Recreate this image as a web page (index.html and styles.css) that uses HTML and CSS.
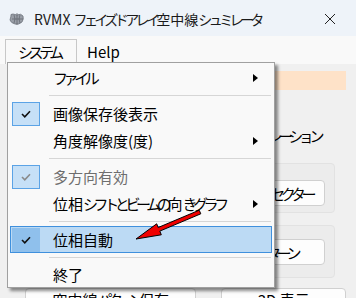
FILE: index.html
```html
<!DOCTYPE html>
<html lang="ja">
<head>
<meta charset="utf-8">
<link rel="stylesheet" href="styles.css">
</head>
<body>
<div class="window">
  <div class="titlebar">
    <svg class="appicon" width="16" height="14" viewBox="0 0 16 14">
      <path d="M2 4 Q1 2 4 2 L8 3 Q12 1 14 4 Q15 7 13 10 Q10 13 6 12 Q2 11 1 8 Z" fill="#9a9fa8" stroke="#6f747c" stroke-width="0.8"/>
      <path d="M8 1 V13 M3 7 H14 M5 3 Q7 7 5 11 M11 3 Q9 7 11 11" stroke="#5e636b" stroke-width="0.7" fill="none"/>
    </svg>
    <span class="title">RVMX <span class="k">フェイズドアレイ</span>空中線<span class="k">シュミレータ</span></span>
    <svg class="close" width="12" height="12" viewBox="0 0 12 12"><path d="M1 1 L11 11 M11 1 L1 11" stroke="#222" stroke-width="1"/></svg>
  </div>
  <div class="menubar">
    <span class="mtab open"><span class="k">システム</span></span>
    <span class="mtab help">Help</span>
  </div>
  <div class="content">
    <div class="field"></div>
    <div class="labelrow"><span class="k">シミュレーション</span></div>
    <div class="group g1"><span class="btn"><span class="k">ビームセクター</span></span></div>
    <div class="group g2"><span class="btn"><span class="k">パターン</span></span></div>
    <div class="bottomrow">
      <span class="btn wide">空中線<span class="k">パターン</span>保存</span>
      <span class="btn wide2">3D 表示</span>
    </div>
  </div>

  <div class="dropdown">
    <div class="item"><span class="gutter"></span><span class="txt k">ファイル</span><span class="arrow"></span></div>
    <div class="sep"></div>
    <div class="item"><span class="gutter"><span class="chk"><svg width="10" height="8" viewBox="0 0 10 8"><path d="M1 4 L3.8 6.8 L9 1.2" stroke="#111" stroke-width="1.6" fill="none"/></svg></span></span><span class="txt">画像保存後表示</span></div>
    <div class="item"><span class="gutter"></span><span class="txt">角度解像度(度)</span><span class="arrow"></span></div>
    <div class="sep"></div>
    <div class="item disabled"><span class="gutter"><span class="chk"><svg width="10" height="8" viewBox="0 0 10 8"><path d="M1 4 L3.8 6.8 L9 1.2" stroke="#8a8a8a" stroke-width="1.6" fill="none"/></svg></span></span><span class="txt">多方向有効</span></div>
    <div class="item"><span class="gutter"></span><span class="txt">位相<span class="k">シフトとビームの</span>向<span class="k">きグラフ</span></span><span class="arrow"></span></div>
    <div class="sep"></div>
    <div class="item hot"><span class="gutter"><span class="chk"><svg width="10" height="8" viewBox="0 0 10 8"><path d="M1 4 L3.8 6.8 L9 1.2" stroke="#111" stroke-width="1.6" fill="none"/></svg></span></span><span class="txt">位相自動</span></div>
    <div class="sep"></div>
    <div class="item last"><span class="gutter"></span><span class="txt">終了</span></div>
  </div>

  <svg class="redarrow" width="356" height="298" viewBox="0 0 356 298">
    <polygon points="136,239 161.3,234.8 159.8,231.1 200.8,213.8 199.2,210.2 158.2,227.5 156.7,223.8" fill="#f00000" stroke="#000" stroke-width="1"/>
  </svg>
</div>
</body>
</html>
```
FILE: styles.css
```css
* { box-sizing: border-box; }
html, body { margin: 0; padding: 0; }
body {
  width: 356px; height: 298px; overflow: hidden;
  background: #f0f0f0;
  font-family: "Noto Sans CJK JP", "Noto Sans", sans-serif;
  color: #000;
  white-space: nowrap;
}
.k { letter-spacing: -4.4px; }
.window { position: relative; width: 356px; height: 298px; overflow: hidden; }
.titlebar {
  height: 36px; background: #eef3f9;
  display: flex; align-items: center; padding-top: 1px;
}
.appicon { margin-left: 9px; margin-right: 9px; }
.title { font-size: 14px; flex: 1; color: #1a1a1a; }
.title .k { letter-spacing: -3.6px; }
.close { margin-right: 20px; }
.menubar {
  height: 28px; background: #f9f9f9;
  display: flex; align-items: flex-end; padding-left: 5px;
}
.mtab {
  font-size: 15px; height: 25px; line-height: 24px; padding: 0 10px 0 12px;
  border: 1px solid transparent; border-bottom: none;
}
.mtab.open { border-color: #c8c8c8; background: #f9f9f9; width: 72px; padding-left: 12px; padding-right: 0; }
.mtab.help { padding-left: 9px; }
.content {
  height: 234px;
  display: flex; flex-direction: column;
  padding: 7px 10px 0 20px;
}
.content > * { flex: none; }
.field { height: 19px; background: #fee2c8; }
.labelrow { display: flex; justify-content: flex-end; padding-right: 26px; margin-top: 36px; font-size: 15px; line-height: 20px; }
.group {
  margin-left: 140px; margin-right: 11px;
  border: 1px solid #e2e2e2; border-radius: 4px; background: #ececec;
  display: flex; justify-content: flex-end; align-items: flex-start; padding-right: 9px;
}
.g1 { margin-top: 17px; height: 50px; padding-top: 16px; }
.g2 { margin-top: 12px; height: 53px; padding-top: 13px; }
.btn {
  display: inline-flex; align-items: center; justify-content: center;
  height: 26px; padding: 0 10px; background: #fdfdfd;
  border: 1px solid #d0d0d0; border-radius: 4px; font-size: 15px;
}
.group .btn { width: 120px; justify-content: flex-end; padding-right: 12px; }
.g2 .btn { padding-right: 27px; }
.bottomrow { display: flex; margin-top: 10px; margin-left: 5px; gap: 25px; }
.wide { width: 175px; height: 22px; }
.wide2 { width: 127px; height: 22px; }

.dropdown {
  position: absolute; left: 7px; top: 62px; width: 268px; height: 226px;
  background: #f9f9f9; border: 1px solid #a0a0a0;
  box-shadow: 3px 3px 3px rgba(0,0,0,0.45);
  padding: 1px 1px 0 1px;
  font-size: 15px;
}
.item {
  height: 27px; display: flex; align-items: center; margin: 0 1px;
  border: 1px solid transparent; position: relative;
}
.item.last { height: 25px; }
.gutter { width: 42px; height: 100%; display: flex; align-items: center; padding-left: 1px; flex: none; }
.chk {
  width: 28px; height: 24px; background: #c6e0f7; border: 1px solid #5ba3e6;
  display: flex; align-items: center; justify-content: center;
}
.txt { flex: 1; }
.disabled .txt { color: #6e6e6e; }
.arrow {
  width: 0; height: 0; margin-right: 13px; flex: none;
  border-left: 5px solid #000; border-top: 4px solid transparent; border-bottom: 4px solid transparent;
}
.sep { height: 9px; display: flex; align-items: center; padding-left: 40px; padding-right: 2px; }
.sep::before { content: ""; flex: 1; height: 1px; background: #d6d6d6; }
.hot { background: #bcdaf4; border-color: #3f90dd; }
.hot .chk { background: #8fc0ec; border-color: #8fc0ec; }
.redarrow { position: absolute; left: 0; top: 0; }
```
